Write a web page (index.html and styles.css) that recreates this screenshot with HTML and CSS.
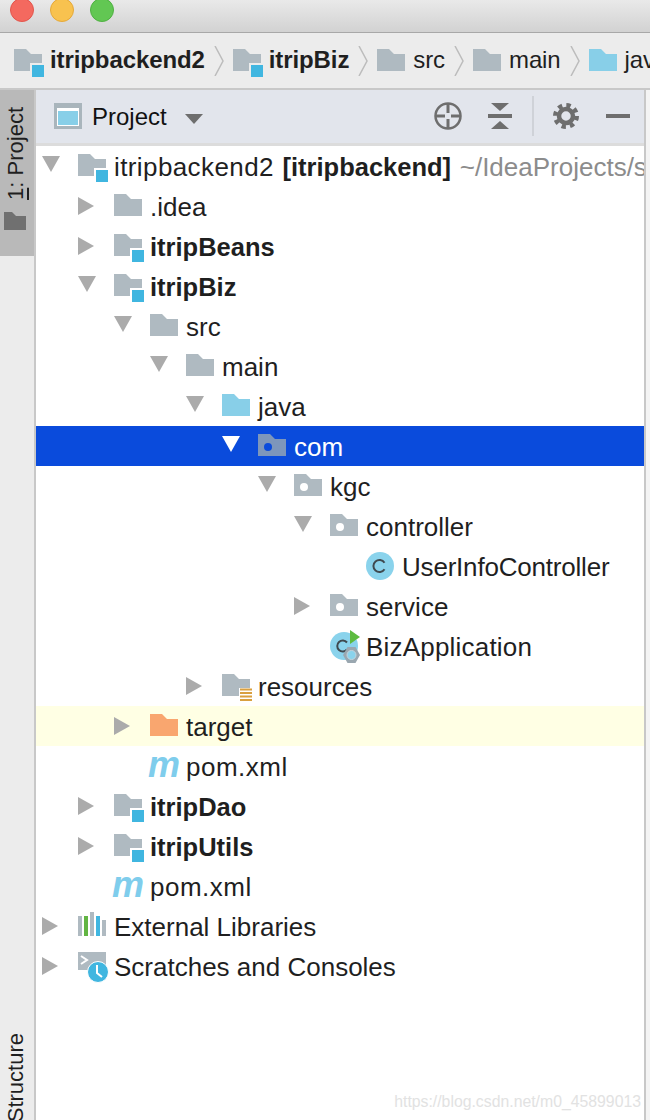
FILE: index.html
```html
<!DOCTYPE html>
<html lang="en">
<head>
    <meta charset="UTF-8">
    <meta name="viewport" content="width=device-width, initial-scale=1.0">
    <title>Project - itripbackend2</title>
    <link rel="stylesheet" href="styles.css">
</head>
<body>
    <!-- shared icons -->
    <svg class="icon-defs" width="0" height="0" aria-hidden="true">
        <symbol id="i-folder" viewBox="0 0 30 28">
            <path d="M0 0H12L17 5H28V22H0Z"/>
        </symbol>
        <symbol id="i-module" viewBox="0 0 30 28">
            <path d="M0 0H12L17 5H28V14H16V22H0Z" fill="#afbac1"/>
            <rect x="18" y="16" width="12" height="12" fill="#40b6e0"/>
        </symbol>
        <symbol id="i-package" viewBox="0 0 30 28">
            <path class="pkg-body" d="M0 0H12L17 5H28V22H0Z"/>
            <circle class="pkg-dot" cx="10" cy="13" r="4"/>
        </symbol>
        <symbol id="i-resources" viewBox="0 0 30 28">
            <path d="M0 0H12L17 5H28V14H17V22H0Z" fill="#afbac1"/>
            <path d="M18 15.500H30M18 19H30M18 22.500H30M18 26H30" stroke="#d9a040" stroke-width="2"/>
        </symbol>
        <symbol id="i-class" viewBox="0 0 28 28">
            <circle cx="14" cy="14" r="14" fill="#8ad3ec"/>
            <path d="M18.500 10.800A6 6 0 1 0 18.500 17.200" fill="none" stroke="#3f4a50" stroke-width="2"/>
        </symbol>
        <symbol id="i-app" viewBox="0 0 32 34">
            <circle cx="14" cy="16" r="14" fill="#8ad3ec"/>
            <path d="M17 12.500A5.500 5.500 0 1 0 17 19.500" fill="none" stroke="#3f4a50" stroke-width="2"/>
            <path d="M20 0L30 7L20 14Z" fill="#5dbb3f"/>
            <path d="M17.500 17H25.500L30 25L25.500 33H17.500L13 25Z" fill="#9aa7b0"/>
            <circle cx="21.500" cy="25" r="4.500" fill="#8ad3ec" stroke="#c4d4dc"/>
        </symbol>
        <symbol id="i-libs" viewBox="0 0 28 24">
            <path d="M0 4H4V24H0ZM12 0H16V24H12ZM24 8H28V24H24Z" fill="#afbac1"/>
            <rect x="6" y="4" width="4" height="20" fill="#62b543"/>
            <rect x="18" y="4" width="4" height="20" fill="#40b6e0"/>
        </symbol>
        <symbol id="i-scratch" viewBox="0 0 32 32">
            <rect width="28" height="18" fill="#afbac1"/>
            <path d="M3 4L9 8L3 12" fill="none" stroke="#fff" stroke-width="2"/>
            <circle cx="20" cy="20" r="10.500" fill="#40b6e0" stroke="#fff" stroke-width="1"/>
            <path d="M19 13V21L24 25" fill="none" stroke="#fff" stroke-width="2"/>
        </symbol>
    </svg>

    <div class="window">
        <div class="title-bar">
            <span class="light light-red"></span>
            <span class="light light-yellow"></span>
            <span class="light light-green"></span>
        </div>

        <nav class="crumbs">
            <svg class="icon"><use href="#i-module"/></svg>
            <span class="crumb-label bold">itripbackend2</span>
            <svg class="crumb-sep" viewBox="0 0 10 30"><path d="M1 0L9 15L1 30"/></svg>
            <svg class="icon"><use href="#i-module"/></svg>
            <span class="crumb-label bold">itripBiz</span>
            <svg class="crumb-sep" viewBox="0 0 10 30"><path d="M1 0L9 15L1 30"/></svg>
            <svg class="icon folder-gray"><use href="#i-folder"/></svg>
            <span class="crumb-label">src</span>
            <svg class="crumb-sep" viewBox="0 0 10 30"><path d="M1 0L9 15L1 30"/></svg>
            <svg class="icon folder-gray"><use href="#i-folder"/></svg>
            <span class="crumb-label">main</span>
            <svg class="crumb-sep" viewBox="0 0 10 30"><path d="M1 0L9 15L1 30"/></svg>
            <svg class="icon folder-blue"><use href="#i-folder"/></svg>
            <span class="crumb-label">java</span>
        </nav>

        <div class="main">
            <aside class="side-strip">
                <div class="side-tab">
                    <span class="side-label"><u>1</u>: Project</span>
                    <svg class="side-folder" viewBox="0 0 22 18"><path d="M0 0H8L12 4H22V18H0Z"/></svg>
                </div>
                <span class="side-label side-structure">Structure</span>
            </aside>

            <section class="panel">
                <header class="panel-head">
                    <svg class="view-icon" viewBox="0 0 28 26">
                        <rect width="28" height="26" fill="#a9b5bc"/>
                        <rect x="3" y="5" width="22" height="18" fill="#fff"/>
                        <rect x="4" y="8" width="20" height="14" fill="#88cfe8"/>
                    </svg>
                    <span class="panel-title">Project</span>
                    <span class="arrow-down head-caret"></span>
                    <div class="head-tools">
                        <svg class="tool tool-locate" viewBox="0 0 28 28">
                            <circle cx="14" cy="14" r="12.500" fill="none" stroke="#6e6e6e" stroke-width="2.500"/>
                            <path d="M14 2V11M14 17V26M2 14H11M17 14H26" stroke="#6e6e6e" stroke-width="3"/>
                        </svg>
                        <svg class="tool tool-collapse" viewBox="0 0 24 26">
                            <path d="M3 0H21L12 8ZM0 11H24V15H0ZM12 18L21 26H3Z" fill="#6e6e6e"/>
                        </svg>
                        <span class="tool-divider"></span>
                        <svg class="tool tool-gear" viewBox="0 0 26 26">
                            <circle cx="13" cy="13" r="10.500" fill="none" stroke="#6e6e6e" stroke-width="5" stroke-dasharray="4.200 4.050"/>
                            <circle cx="13" cy="13" r="7" fill="none" stroke="#6e6e6e" stroke-width="4.500"/>
                        </svg>
                        <span class="tool-minus"></span>
                    </div>
                </header>

                <ul class="tree">
                    <li class="row d0"><span class="arrow-down"></span><svg class="icon"><use href="#i-module"/></svg><span class="name root-name">itripbackend2 <b>[itripbackend]</b> <span class="path">~/IdeaProjects/s</span></span></li>
                    <li class="row d1"><span class="arrow-right"></span><svg class="icon folder-gray"><use href="#i-folder"/></svg><span class="name">.idea</span></li>
                    <li class="row d1"><span class="arrow-right"></span><svg class="icon"><use href="#i-module"/></svg><span class="name bold">itripBeans</span></li>
                    <li class="row d1"><span class="arrow-down"></span><svg class="icon"><use href="#i-module"/></svg><span class="name bold">itripBiz</span></li>
                    <li class="row d2"><span class="arrow-down"></span><svg class="icon folder-gray"><use href="#i-folder"/></svg><span class="name">src</span></li>
                    <li class="row d3"><span class="arrow-down"></span><svg class="icon folder-gray"><use href="#i-folder"/></svg><span class="name">main</span></li>
                    <li class="row d4"><span class="arrow-down"></span><svg class="icon folder-blue"><use href="#i-folder"/></svg><span class="name">java</span></li>
                    <li class="row d5 selected"><span class="arrow-down"></span><svg class="icon"><use href="#i-package"/></svg><span class="name">com</span></li>
                    <li class="row d6"><span class="arrow-down"></span><svg class="icon"><use href="#i-package"/></svg><span class="name">kgc</span></li>
                    <li class="row d7"><span class="arrow-down"></span><svg class="icon"><use href="#i-package"/></svg><span class="name">controller</span></li>
                    <li class="row d8"><span class="arrow-none"></span><svg class="icon icon-class"><use href="#i-class"/></svg><span class="name tight">UserInfoController</span></li>
                    <li class="row d7"><span class="arrow-right"></span><svg class="icon"><use href="#i-package"/></svg><span class="name">service</span></li>
                    <li class="row d7"><span class="arrow-none"></span><svg class="icon icon-app"><use href="#i-app"/></svg><span class="name loose">BizApplication</span></li>
                    <li class="row d4"><span class="arrow-right"></span><svg class="icon"><use href="#i-resources"/></svg><span class="name">resources</span></li>
                    <li class="row d2 excluded"><span class="arrow-right"></span><svg class="icon folder-orange"><use href="#i-folder"/></svg><span class="name">target</span></li>
                    <li class="row d2"><span class="arrow-none"></span><span class="maven-m">m</span><span class="name pom">pom.xml</span></li>
                    <li class="row d1"><span class="arrow-right"></span><svg class="icon"><use href="#i-module"/></svg><span class="name bold">itripDao</span></li>
                    <li class="row d1"><span class="arrow-right"></span><svg class="icon"><use href="#i-module"/></svg><span class="name bold">itripUtils</span></li>
                    <li class="row d1"><span class="arrow-none"></span><span class="maven-m">m</span><span class="name pom">pom.xml</span></li>
                    <li class="row d0"><span class="arrow-right"></span><svg class="icon icon-libs"><use href="#i-libs"/></svg><span class="name">External Libraries</span></li>
                    <li class="row d0"><span class="arrow-right"></span><svg class="icon icon-scratch"><use href="#i-scratch"/></svg><span class="name">Scratches and Consoles</span></li>
                </ul>
            </section>
        </div>

        <div class="watermark">https://blog.csdn.net/m0_45899013</div>
    </div>
</body>
</html>
```

FILE: styles.css
```css
* {
    margin: 0;
    padding: 0;
    box-sizing: border-box;
}

body {
    font-family: 'Liberation Sans', Arial, sans-serif;
    color: #1f1f1f;
    background: #f4f4f4;
    overflow: hidden;
}

.icon-defs {
    position: absolute;
}

.window {
    position: relative;
    width: 650px;
    height: 1120px;
    display: flex;
    flex-direction: column;
    overflow: hidden;
}

.bold {
    font-weight: 700;
}

/* title bar */
.title-bar {
    flex: none;
    height: 33px;
    padding-left: 10px;
    display: flex;
    gap: 16px;
    background: linear-gradient(#e9e9e9, #d2d2d2);
    border-bottom: 1px solid #a8a8a8;
    overflow: hidden;
}

.light {
    flex: none;
    width: 24px;
    height: 24px;
    margin-top: -2px;
    border-radius: 50%;
}

.light-red {
    background: #f4695f;
    border: 1px solid #e2564d;
}

.light-yellow {
    background: #f8c24f;
    border: 1px solid #e5a93a;
}

.light-green {
    background: #62c753;
    border: 1px solid #50b043;
}

/* breadcrumbs */
.crumbs {
    flex: none;
    height: 57px;
    padding-left: 14px;
    display: flex;
    align-items: center;
    background: #ececec;
    border-bottom: 2px solid #c8c8c8;
    white-space: nowrap;
    overflow: hidden;
}

.crumbs .icon {
    margin-top: 4px;
    margin-right: 6px;
}

.crumb-label {
    margin-top: -2px;
    font-size: 24px;
    letter-spacing: -0.1px;
}

.crumb-sep {
    flex: none;
    width: 10px;
    height: 30px;
    margin: 0 9px;
    fill: none;
    stroke: #bcbcbc;
    stroke-width: 1.5;
}

/* shared icon sizes and colours */
.icon {
    flex: none;
    width: 30px;
    height: 28px;
}

.folder-gray {
    fill: #afbac1;
}

.folder-blue {
    fill: #88cfe8;
}

.folder-orange {
    fill: #f9a66f;
}

.pkg-body {
    fill: var(--pkg-body, #afbac1);
}

.pkg-dot {
    fill: var(--pkg-dot, #fff);
}

/* main area */
.main {
    flex: 1;
    min-height: 0;
    display: flex;
}

.side-strip {
    flex: none;
    width: 36px;
    display: flex;
    flex-direction: column;
    justify-content: space-between;
    background: #ececec;
    border-right: 2px solid #c8c8c8;
}

.side-tab {
    height: 166px;
    padding: 17px 2px 0 0;
    display: flex;
    flex-direction: column;
    align-items: center;
    gap: 12px;
    background: #b9b9b9;
}

.side-label {
    font-size: 22px;
    writing-mode: vertical-rl;
    transform: rotate(180deg);
    white-space: nowrap;
}

.side-folder {
    width: 22px;
    height: 18px;
    margin-right: 2px;
    fill: #707070;
}

.side-structure {
    align-self: center;
    margin-right: 2px;
    margin-bottom: -2px;
}

.panel {
    flex: none;
    width: 610px;
    display: flex;
    flex-direction: column;
    background: #fff;
    border-right: 2px solid #c8c8c8;
}

.panel-head {
    flex: none;
    height: 56px;
    padding: 3px 0 4px 18px;
    display: flex;
    align-items: center;
    background: #e2e5ec;
    border-bottom: 3px solid #dcdcdc;
}

.view-icon {
    width: 28px;
    height: 26px;
}

.panel-title {
    margin-left: 10px;
    margin-top: 2px;
    font-size: 24px;
    color: #111;
}

.panel-head .head-caret {
    margin: 6px 0 0 18px;
    border-top-width: 10px;
    border-top-color: #6e6e6e;
}

.head-tools {
    margin-left: auto;
    margin-right: 14px;
    display: flex;
    align-items: center;
}

.tool-locate {
    width: 28px;
    height: 28px;
}

.tool-collapse {
    width: 24px;
    height: 26px;
    margin-left: 26px;
}

.tool-divider {
    width: 2px;
    height: 40px;
    margin-left: 20px;
    background: #cfd2d8;
}

.tool-gear {
    width: 26px;
    height: 26px;
    margin-left: 19px;
}

.tool-minus {
    width: 24px;
    height: 4px;
    margin-left: 27px;
    background: #6e6e6e;
}

/* project tree */
.tree {
    list-style: none;
}

.row {
    height: 40px;
    display: flex;
    align-items: center;
    white-space: nowrap;
    overflow: hidden;
}

.d0 { padding-left: 6px; }
.d1 { padding-left: 42px; }
.d2 { padding-left: 78px; }
.d3 { padding-left: 114px; }
.d4 { padding-left: 150px; }
.d5 { padding-left: 186px; }
.d6 { padding-left: 222px; }
.d7 { padding-left: 258px; }
.d8 { padding-left: 294px; }

.row .icon {
    margin-top: 4px;
    margin-right: 6px;
}

.row .icon-class {
    width: 28px;
    margin-top: 0;
    margin-right: 8px;
}

.row .icon-app {
    width: 32px;
    height: 34px;
    margin-top: 2px;
    margin-right: 4px;
}

.row .icon-libs {
    width: 28px;
    height: 24px;
    margin-top: -4px;
    margin-right: 8px;
}

.row .icon-scratch {
    width: 32px;
    height: 32px;
    margin-top: 4px;
    margin-right: 4px;
}

.arrow-down,
.arrow-right,
.arrow-none {
    flex: none;
    width: 0;
    height: 0;
    border-style: solid;
    border-color: transparent;
}

.arrow-down {
    margin-top: -4px;
    margin-right: 18px;
    border-width: 16px 9px 0;
    border-top-color: #ababab;
}

.arrow-right {
    border-width: 9px 0 9px 16px;
    border-left-color: #ababab;
    margin-right: 20px;
}

.arrow-none {
    border-width: 0;
    margin-right: 36px;
}

.name {
    margin-top: 2px;
    font-size: 26px;
    line-height: 40px;
}

.name.bold,
.name b {
    font-size: 25.500px;
    letter-spacing: 0;
}

.root-name {
    letter-spacing: 0.4px;
    word-spacing: 1px;
}

.tight {
    letter-spacing: -0.2px;
}

.loose {
    letter-spacing: 0.2px;
}

.pom {
    letter-spacing: 0.5px;
}

.path {
    color: #8c8c8c;
    letter-spacing: 0;
}

.selected {
    --pkg-body: #7d96bb;
    --pkg-dot: #0a4bdc;
    background: #0a4bdc;
    color: #fff;
}

.selected .arrow-down {
    border-top-color: #fff;
}

.excluded {
    background: #ffffe4;
}

.maven-m {
    flex: none;
    width: 38px;
    margin-left: -2px;
    margin-top: -2px;
    font-size: 36px;
    line-height: 40px;
    font-weight: 700;
    font-style: italic;
    color: #7fcdec;
}

/* overlay text */
.watermark {
    position: absolute;
    right: 9px;
    bottom: 9px;
    font-size: 15.800px;
    color: #e2e2e2;
}
```
